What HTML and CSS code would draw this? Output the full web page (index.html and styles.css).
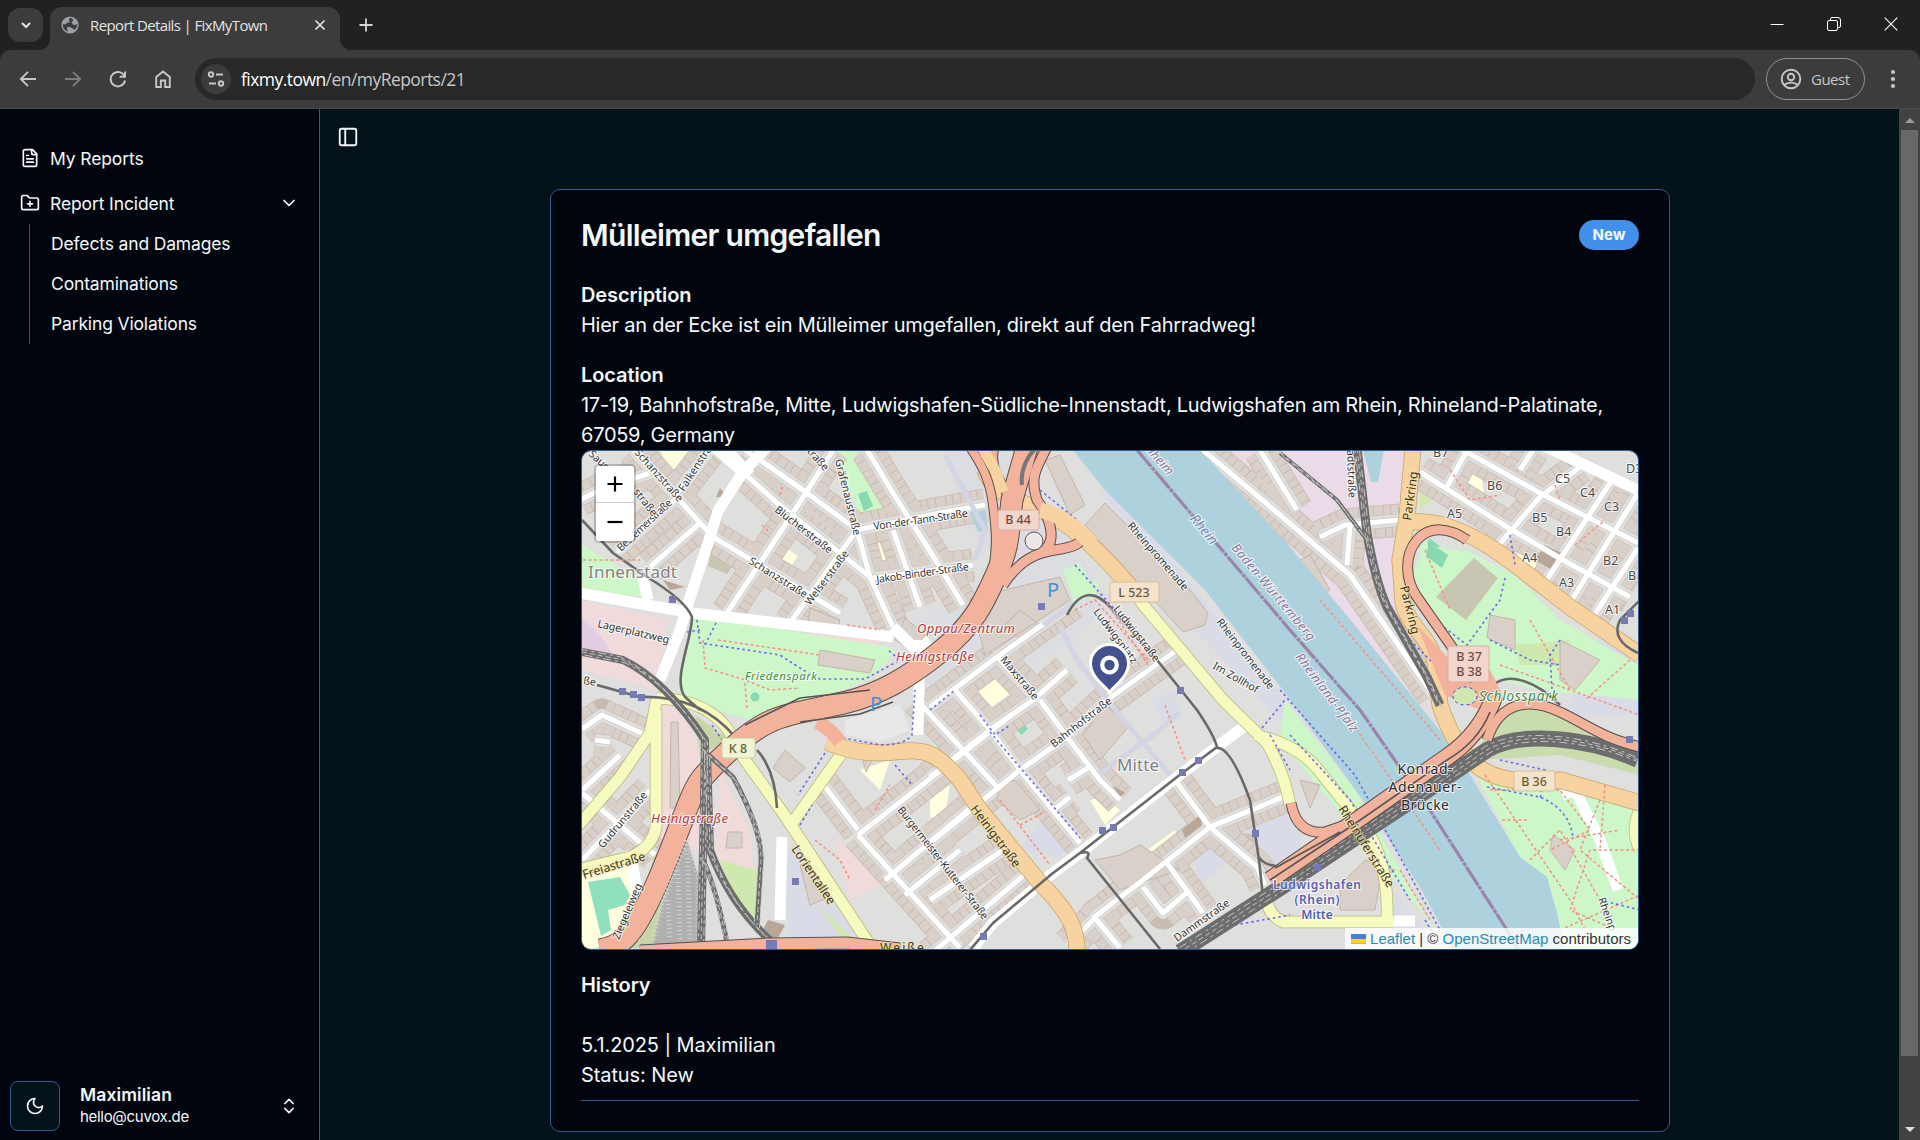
FILE: index.html
```html
<!DOCTYPE html>
<html lang="en">
<head>
<meta charset="utf-8">
<title>Report Details | FixMyTown</title>
<link rel="stylesheet" href="styles.css">
</head>
<body>
<div class="window">
  <header class="tabstrip">
    <button class="tab-search"><svg width="12" height="12" viewBox="0 0 12 12"><path d="M2 4l4 4 4-4" fill="none" stroke="#e3e3e3" stroke-width="2"/></svg></button>
    <div class="tab">
      <svg class="globe" width="18" height="18" viewBox="0 0 18 18"><circle cx="9" cy="9" r="8.6" fill="#9aa0a6"/><path d="M10 1.8c-2 .6-2.300 2-1.600 3 1 .9 0 1.800-1.600 1.700-1.300 0-1.200 1.600-2.400 1.800H1.900c-.4 3.600 2 6.500 4.800 7.300.4-1.500-.7-2-1-3.200.2-1.300 1.500-1.400 3-1.300 1.500.2 1.700 1.700 3.200 1.500.9.200.5 1.500 1.400 1.500 2-1.300 3.300-3.500 2.900-6-1.200.2-1.600 1.200-3 1-1.700-.3-1.400-2-2.800-2.700 0-1 1.800-1.100 1.900-2.200.1-1-.9-1.300-2.300-2.400z" fill="#3c3c3c"/></svg>
      <span class="tab-title">Report Details | FixMyTown</span>
      <svg class="tab-close" width="12" height="12" viewBox="0 0 12 12"><path d="M1.500 1.500l9 9m0-9l-9 9" stroke="#e3e3e3" stroke-width="1.700"/></svg>
    </div>
    <svg class="newtab" width="14" height="14" viewBox="0 0 14 14"><path d="M7 .5v13M.5 7h13" stroke="#d5d5d5" stroke-width="1.800"/></svg>
    <div class="controls">
      <svg width="14" height="14" viewBox="0 0 14 14"><path d="M.5 7.500h13" stroke="#fff"/></svg>
      <svg width="14" height="14" viewBox="0 0 14 14" fill="none" stroke="#fff"><rect x=".5" y="3.500" width="10" height="10" rx="1.500"/><path d="M3.500 3V2A1.500 1.500 0 0 1 5 .5h6A2.500 2.500 0 0 1 13.500 3v6a1.500 1.500 0 0 1-1.500 1.500h-1"/></svg>
      <svg width="14" height="14" viewBox="0 0 14 14"><path d="M.7.7l12.600 12.600m0-12.600L.7 13.300" stroke="#fff" stroke-width="1.100"/></svg>
    </div>
  </header>
  <div class="toolbar">
    <div class="nav">
      <svg width="18" height="18" viewBox="0 0 18 18"><path d="M17 9H2M9 1.800L1.800 9 9 16.200"/></svg>
      <svg class="off" width="18" height="18" viewBox="0 0 18 18"><path d="M1 9h15M9 1.800L16.200 9 9 16.200"/></svg>
      <svg width="18" height="18" viewBox="0 0 18 18"><path d="M15.600 6.500A7.200 7.200 0 1 0 16 10.500M16 1.500v5.300h-5.300"/></svg>
      <svg width="18" height="18" viewBox="0 0 18 18"><path d="M2.200 7L9 1.500 15.800 7v10h-4.600v-6.500H6.800V17H2.200z"/></svg>
    </div>
    <div class="address">
      <span class="site"><svg width="18" height="18" viewBox="0 0 18 18"><circle cx="4" cy="4.500" r="2.200"/><path d="M9 4.500h7M2 13.500h7"/><circle cx="14" cy="13.500" r="2.200"/></svg></span>
      <span class="url"><b>fixmy.town</b>/en/myReports/21</span>
    </div>
    <div class="guest"><svg width="22" height="22" viewBox="0 0 22 22"><circle cx="11" cy="11" r="9.300"/><circle cx="11" cy="9" r="3.200"/><path d="M4.500 17c3-3.200 10-3.200 13 0"/></svg><span>Guest</span></div>
    <svg class="dots" width="6" height="20" viewBox="0 0 6 20"><circle cx="3" cy="3" r="2.100"/><circle cx="3" cy="10" r="2.100"/><circle cx="3" cy="17" r="2.100"/></svg>
  </div>
  <div class="page">
    <aside class="sidebar">
      <nav class="menu">
        <a class="item"><svg class="lucide" viewBox="0 0 24 24"><path d="M15 2H6a2 2 0 0 0-2 2v16a2 2 0 0 0 2 2h12a2 2 0 0 0 2-2V7Z"/><path d="M14 2v4a2 2 0 0 0 2 2h4M10 9H8M16 13H8M16 17H8"/></svg><span>My Reports</span></a>
        <a class="item"><svg class="lucide" viewBox="0 0 24 24"><path d="M12 10v6M9 13h6M20 20a2 2 0 0 0 2-2V8a2 2 0 0 0-2-2h-7.900a2 2 0 0 1-1.690-.9L9.600 3.900A2 2 0 0 0 7.930 3H4a2 2 0 0 0-2 2v13a2 2 0 0 0 2 2Z"/></svg><span>Report Incident</span><svg class="lucide end" viewBox="0 0 24 24"><path d="m6 9 6 6 6-6"/></svg></a>
        <div class="sub"><a>Defects and Damages</a><a>Contaminations</a><a>Parking Violations</a></div>
      </nav>
      <div class="user">
        <button class="theme"><svg class="lucide" viewBox="0 0 24 24"><path d="M12 3a6 6 0 0 0 9 9 9 9 0 1 1-9-9Z"/></svg></button>
        <div class="who"><strong>Maximilian</strong><span>hello@cuvox.de</span></div>
        <svg class="lucide end" viewBox="0 0 24 24"><path d="m7 15 5 5 5-5M7 9l5-5 5 5"/></svg>
      </div>
    </aside>
    <main class="main">
      <svg class="lucide panel" viewBox="0 0 24 24"><rect width="18" height="18" x="3" y="3" rx="2"/><path d="M9 3v18"/></svg>
      <article class="card">
        <div class="head"><h1>Mülleimer umgefallen</h1><span class="badge">New</span></div>
        <section><h2>Description</h2><p class="desc">Hier an der Ecke ist ein Mülleimer umgefallen, direkt auf den Fahrradweg!</p></section>
        <section class="loc"><h2>Location</h2><p class="addr">17-19, Bahnhofstraße, Mitte, Ludwigshafen-Südliche-Innenstadt, Ludwigshafen am Rhein, Rhineland-Palatinate,<br>67059, Germany</p></section>
        <div class="map">
<svg class="tiles" viewBox="582 451 1056 498" preserveAspectRatio="none">
<defs>
<g id="west">
<path d="M633 450L673 493 713 537 840 613M580 500L600 490 650 473M677 493L710 450M650 567L700 523 713 537M743 472L777 503 840 553 870 577M745 450L760 460 807 493 857 530M833 450L793 513 760 563 727 613M857 530L840 553 790 623M857 530L870 577 893 627M857 530L940 513 985 505M867 450L893 493 940 567 963 605M893 530L920 607M873 578L973 565M617 552L677 498"/>
<path d="M582 729L602 715 650 737M595 740L610 742M620 755L582 790M582 793L655 855M650 790L582 860M823 784L858 830M858 835L1005 720M858 835L960 948M885 880L980 800M930 955L1030 870M905 895L960 850"/>
<path d="M930 843L983 800 1020 770 1067 737 1107 700 1177 650M930 777L990 730 1033 700 1067 670M930 707L997 657 1073 603M930 900L1003 850M1093 918L1143 880 1210 827 1283 797M1068 945L1095 918 1120 948M997 657L1038 700M955 690L990 730 1020 770 1080 843M917 700L963 750 1000 790M1040 700L1067 737 1100 780 1120 800M1177 783L1210 827 1257 867 1265 885M1143 887L1163 913 1190 890M1167 863L1203 913M1068 780L1088 768M1053 810L1070 797"/>
</g>
<g id="east">
<path d="M1420 472L1507 527 1563 560 1630 597M1463 450L1540 493 1638 543M1467 450L1447 487M1533 450L1520 470M1580 467L1540 497 1497 547M1612 480L1540 590M1638 493L1570 603M1638 548L1593 617"/>
<path d="M1203 450L1280 515 1350 575 1433 695M1260 450L1297 510M1320 537L1345 525 1400 520M1347 565L1350 525"/>
</g>
<g id="mway">
<path class="w22" d="M600 950C620 946 632 940 657 883S690 792 703 777 745 734 767 723 815 710 847 702 905 680 940 652 985 600 997 573 1008 535 1012 500L1027 447"/>
<path class="w9" d="M1003 585C1020 560 1035 553 1055 550 1075 547 1082 543 1081 537"/>
<path class="w8" d="M970 447C982 465 990 480 993 505S998 545 992 575"/>
<path class="w9" d="M1047 447C1035 470 1030 478 1037 500 1052 520 1058 545 1040 553"/>
<path class="w9" d="M994 447Q988 470 1008 493"/>
</g>
<g id="emway">
<path class="w9" d="M1467 540C1450 528 1430 525 1417 540S1405 580 1417 597 1447 640 1475 680"/>
<path class="w17" d="M1270 880L1353 823 1447 757Q1480 735 1495 695"/>
<path class="w9" d="M1487 740C1500 700 1530 698 1560 712S1600 737 1640 747"/>
<path class="w9" d="M1291 803Q1297 835 1325 832L1360 820"/>
<path class="w11" d="M640 951L767 944 847 943 900 949"/>
</g>
<g id="orange">
<path d="M827 742C860 756 880 753 905 751S940 757 960 780L980 810 1040 883C1070 912 1077 930 1077 952"/>
<path d="M985 470C992 495 1030 505 1050 515S1095 545 1133 590"/>
<path d="M1413 448L1407 517 1400 560 1403 603C1410 630 1435 640 1436 670L1440 705Q1455 750 1480 768T1560 780L1640 803"/>
<path d="M1405 523Q1450 515 1513 563L1570 607 1640 655"/>
</g>
<g id="yellow">
<path d="M657 698L650 733 620 777 578 826M656 710V827Q652 848 630 857L578 870M657 698Q710 700 730 733L740 753 783 813 868 942M842 753L793 822"/>
<path d="M1128 584L1145 607 1223 700 1267 743Q1285 775 1290 805M1255 735Q1300 745 1320 772L1353 813Q1390 850 1387 921M1393 922H1283Q1268 915 1267 900M1640 810Q1630 830 1640 850"/>
</g>
<g id="rails">
<path class="w17" d="M1638 760C1590 738 1520 730 1487 750L1447 777 1367 830 1280 888 1180 952"/>
<path class="w9" d="M1357 448L1367 533Q1375 580 1387 607L1427 677 1440 705"/>
<path class="w4" d="M1280 453L1337 500 1367 540"/>
<path class="w8" d="M582 652L623 660Q665 680 705 740L704 800 701 948"/>
<path class="w8" d="M707 755L710 850Q730 905 772 942"/>
<path class="w5" d="M703 750L733 777Q762 830 761 860L757 925"/>
<path class="w5" d="M703 860Q717 890 728 948"/>
</g>
<g id="tram">
<path d="M582 520L613 553 647 577Q685 600 692 617C692 640 672 680 685 697L700 710M597 685L640 697Q700 695 735 737M757 750Q775 770 777 808"/>
<path d="M970 950L993 923 1053 873 1080 853 1177 777 1217 747Q1214 735 1197 710L1157 660 1110 607C1095 590 1080 590 1067 615M1080 853Q1092 850 1087 858L1160 949M1216 748Q1230 745 1250 800L1259 860 1263 897M1259 857Q1265 868 1290 866M1638 653Q1610 640 1620 620L1640 600M1490 690C1500 672 1530 675 1560 705"/>
</g>
</defs>
<rect x="580" y="450" width="1060" height="500" fill="#dfdfde"/>
<g fill="#d9dbe6">
<path d="M895 630L955 600 1000 560 960 520 950 450H1005L1110 600 1075 640 930 720z" opacity=".55"/>
<path d="M1150 700L1175 690 1180 712 1165 725zM1015 855L1045 815 1070 830 1060 862 1045 850zM1213 830L1300 810 1300 900 1262 870zM1190 845L1215 830 1230 860 1200 885zM780 848L800 850 830 900 870 935 790 940z"/>
<path d="M1560 463L1583 470 1570 490 1550 480zM1600 637L1640 660V715L1565 715 1580 670z"/>
<path d="M1100 490L1120 495 1300 720 1290 730 1180 615z"/>
<path d="M1385 880L1440 950H1395z"/>
</g>
<path d="M1200 450H1410L1400 600 1410 690 1280 540z" fill="#ebdbe8"/>
<path d="M582 600L668 620 655 690 582 670z" fill="#f0dada"/>
<path d="M582 617L600 635 613 655 582 652z" fill="#e2cde2"/>
<path d="M663 705Q690 705 700 760V850L660 850zM720 770L750 830 753 870 715 860zM820 630L880 640 870 670 815 665zM835 840L875 860 880 885 850 900z" fill="#f0dada"/>
<g fill="#cdf7c9">
<path d="M693 615L895 648Q880 690 780 705L750 720 700 705 680 700 682 665zM582 545L642 580 645 597 582 590zM835 450H853L883 508 860 517zM1063 570L1080 563 1095 590 1075 605zM1080 585L1100 582 1092 600z"/>
<path d="M1420 540L1450 550 1520 580 1560 620 1638 665V700L1540 690 1500 680 1460 655 1420 600z"/>
<path d="M1470 763L1500 780 1640 808V950H1563L1547 877 1520 857z"/>
<path d="M1600 525L1607 520 1605 555 1575 550z"/>
<path d="M1285 700L1355 790 1440 940 1420 910 1280 740zM930 705L957 745 940 757 928 735z"/>
</g>
<path d="M1485 715Q1520 695 1560 712L1640 748V775L1560 755 1480 760z" fill="#c8dcae"/>
<g fill="#cfe8b0">
<path d="M720 860L757 870 755 920 730 890zM782 870L865 950 850 950 815 900zM1515 645L1570 640 1560 665 1520 665zM1420 475L1445 490 1420 510z"/>
<path d="M663 870L655 850 643 905 600 948H655L680 900zM695 715L730 740 700 755z" fill="#c8d5a8"/>
</g>
<g fill="#ffffe0"><path d="M660 450H703L680 490zM582 870L628 860 640 940 582 950zM870 540L885 535 894 560 872 568zM780 544L798 556 790 568 778 557zM968 690L1000 670 1015 690 985 712zM860 770L890 760 880 790zM1140 855L1175 830 1180 840 1162 858zM1520 550L1540 555 1535 570 1515 562zM1090 800L1105 797 1120 810 1105 825zM930 790L950 785 945 815 930 818zM1460 475L1480 468 1485 500 1465 495z"/></g>
<g fill="#88d8b0"><path d="M858 494L867 491 873 506 864 511zM1429 538L1448 553 1442 568 1425 555zM1015 727L1022 722 1028 729 1021 735z"/><path d="M588 882L620 877 630 895 625 905 608 910 611 930 601 936z" fill="#8fe0bc"/><circle cx="755" cy="697" r="4.500"/></g>
<path d="M713 542L740 555 727 574 708 566zM1232 832L1258 835 1257 852 1230 840z" fill="#c8c5b3"/>
<use href="#west" class="b1"/><use href="#west" class="b2"/><use href="#west" class="b3"/><use href="#west" class="b4"/>
<use href="#east" class="b1"/><use href="#east" class="b2"/><use href="#east" class="b3"/><use href="#east" class="b4"/>
<path d="M1412 575L1425 545 1470 552 1520 578 1495 640 1460 655z" fill="#cdf7c9"/>
<path d="M1474 558L1498 578 1466 620 1436 597z" fill="#c8c5b3"/>
<path d="M1429 542L1448 555 1442 568 1426 556z" fill="#88d8b0"/>
<g class="block">
<path d="M1105 503L1190 590 1208 613 1205 625 1183 632 1085 525zM1140 845L1180 870 1120 890 1095 860 1120 855zM773 768L785 750 805 768 790 782zM671 722L678 722 680 808H670zM970 598L1060 577 1070 600 985 655zM1490 615L1515 620 1515 650 1487 638zM1560 640L1600 660 1575 690 1560 680zM1045 460L1060 455 1085 505 1070 515zM1395 870L1380 880 1375 910 1340 910V885L1365 860zM905 618L925 635 913 650 895 640zM820 650L875 660 870 673 818 665zM1083 735L1105 705 1130 725 1100 760zM1000 785L1015 780 1040 810 1020 820 997 800zM810 608L840 620 838 628 808 622zM728 832L742 832 742 848 726 848zM800 865L815 860 835 895 810 905zM860 750L875 755 866 772zM1300 780L1320 785 1310 808zM1553 835L1575 850 1565 870 1550 850zM1020 610L1040 625 1020 640 1005 625zM1300 560L1310 555 1330 590 1320 595z"/>
</g>
<g class="dark"><path d="M720 488L727 497 716 497zM663 580L685 587 670 590zM1112 785L1125 793 1120 797zM1182 830L1200 815 1202 825 1185 838zM1545 545L1562 553 1552 570 1535 560zM768 920L785 925 778 938 760 935z"/></g>
<path class="river" d="M1073 450L1105 490 1205 590 1283 690 1370 810 1420 887 1443 930 1450 950H1565L1557 913 1547 877 1520 857 1453 747 1407 690 1353 623 1290 547 1200 450zM1363 450H1384L1378 482H1371zM970 512L985 510 988 530 978 532z"/>
<path class="border" d="M1137 450L1290 630 1360 710 1433 815 1507 930 1518 950"/>
<use href="#west" class="s1"/><use href="#east" class="s1"/><use href="#west" class="s2"/><use href="#east" class="s2"/>
<path d="M1060 627L1077 660 1113 707 1177 783M1100 773L1160 730 1180 712M1043 625L1073 603M945 455L985 530 975 560" fill="none" stroke="#d3d4e4" stroke-width="5"/>
<g class="wide"><path d="M713 446L743 472 718 511 710 537 687 607 680 630 660 680M768 446L743 472M725 448L750 475M580 593L647 605 693 613 863 633 893 637M643 577L648 600M893 627L918 652 930 640M920 640L918 735M973 948L993 923 1053 873 1080 853 1177 777 1250 722M1540 444L1638 490M1562 795L1575 790 1600 840 1618 890M782 837L780 920M1393 921H1415M630 850L637 890"/></g>
<path d="M845 720L900 705 910 730 880 742 845 735z" fill="#e8e8e8"/>
<use href="#yellow" class="yc"/><use href="#yellow" class="yf"/>
<use href="#orange" class="oc"/><use href="#orange" class="of"/>
<use href="#tram" class="tram"/>
<g class="red"><path d="M703 640L705 668Q730 675 745 680L770 690 800 688M718 640L820 655M745 683L747 710M847 625L880 630M762 525L770 533M780 495L783 485M875 810L890 785M815 840L840 860 850 880M1000 800L1050 865M1020 825L1045 812M1165 705L1185 760M1107 603L1148 665M1075 610L1095 600 1150 662M1320 600L1440 740M1425 550L1450 610M1500 665L1640 715M1530 620L1570 690M1630 660L1585 700M1485 775L1570 900 1590 940M1490 790L1560 790 1590 830 1550 850M1600 800L1580 850 1640 900M1640 850L1590 850 1570 910 1640 940M1530 860L1560 830 1600 900M1560 840L1620 830M1450 470L1470 500 1500 495M1555 485L1560 500M1575 545L1605 520M1350 720L1440 850M1560 930L1640 895M1605 785L1600 850M1400 870L1430 920M1527 820L1500 820M583 560L640 560"/></g>
<g class="blue"><path d="M697 620L700 643 780 655Q810 675 820 679H865L900 660 888 650M716 623L705 645M843 738L880 745Q905 745 912 735L915 690M712 725L722 740M825 753L798 795M800 825L812 805M895 765L912 785M980 715L995 735 1010 725M990 732L1080 838M1075 565L1115 610M1040 490L1077 520M930 710L955 690M1280 690L1355 775 1440 930M1290 735L1350 800 1410 900M1410 640L1435 665M1490 640L1530 660 1560 665M1505 578L1500 600 1467 645 1445 628M1510 535L1515 565M1560 640L1550 655 1552 690M1487 787L1540 797Q1570 810 1573 838M1500 760L1545 770 1540 800M1270 735L1290 770M1235 925L1290 915M687 632L700 630M1262 728L1285 700M1600 900L1640 910M1425 920L1440 945"/></g>
<use href="#mway" class="mc"/><use href="#mway" class="mf"/>
<path d="M1022 485C1020 470 1028 455 1036 448" fill="none" stroke="#777" stroke-width="4"/>
<path d="M982 447L995 470 1003 492" fill="none" stroke="#f6d3a0" stroke-width="11"/>
<path d="M1040 510Q1065 515 1092 544" fill="none" stroke="#f6d3a0" stroke-width="15.500"/>
<path d="M817 722Q830 728 840 742" fill="none" stroke="#f3b29b" stroke-width="14"/>
<path d="M1417 625L1450 660 1490 670 1505 700 1480 710 1445 695z" fill="#f3b29b"/>
<ellipse cx="1034" cy="541" rx="9" ry="9" fill="#ece8e4" stroke="#555"/>
<ellipse cx="1465" cy="696" rx="12" ry="9" fill="#cfe8b0" stroke="#44e" stroke-dasharray="3 3"/>
<path d="M687 840L698 875V948H652L662 905z" class="yard"/><path d="M687 840L698 875V948H652L662 905zM687 850L690 940M678 870L680 940M668 900L670 940" class="yard2"/>
<use href="#rails" class="rc"/><use href="#rails" class="rf"/><use href="#rails" class="rf big" x="2.500" y="3"/><use href="#rails" class="rf big" x="-2.500" y="-3"/>
<use href="#emway" class="mc"/><use href="#emway" class="mf"/>
<path d="M1270 880L1353 825 1447 760Q1478 742 1490 712M745 725L800 698 870 690M800 722L860 714 893 702M1275 868L1340 832" class="median"/>
<g fill="#777bb3"><path d="M669 596h7v7h-7zM619 688h7v7h-7zM630 691h7v7h-7zM638 694h7v7h-7zM1038 603h7v7h-7zM1177 687h7v7h-7zM1195 757h7v7h-7zM1179 769h7v7h-7zM1099 827h7v7h-7zM1110 824h7v7h-7zM1252 830h7v7h-7zM980 933h7v7h-7zM792 878h7v7h-7zM1314 864h7v7h-7zM1626 736h7v7h-7zM1627 610h7v7h-7zM1621 617h7v7h-7zM766 940h11v9h-11z"/></g>
<g class="road">
<text transform="translate(634 453) rotate(48)">Schanzstraße</text><text transform="translate(588 455) rotate(42)">Sauerstr.</text><text transform="translate(684 492) rotate(-57)">Falkenstraße</text><text transform="translate(621 552) rotate(-43)" textLength="71">Bessemerstraße</text><text transform="translate(633 492) rotate(52)">straße</text>
<text transform="translate(774 511) rotate(38)">Blücherstraße</text><text transform="translate(748 563) rotate(32)">Schanzstraße</text><text transform="translate(810 606) rotate(-53)">Welserstraße</text><text transform="translate(835 460) rotate(76)">Gräfenaustraße</text><text transform="translate(803 448) rotate(48)">straße</text><text transform="translate(874 530) rotate(-8)" textLength="95">Von-der-Tann-Straße</text><text transform="translate(877 583) rotate(-8)" textLength="93">Jakob-Binder-Straße</text>
<text transform="translate(597 627) rotate(13)">Lagerplatzweg</text><text transform="translate(583 684) rotate(8)">ße</text><text transform="translate(603 849) rotate(-50)">Gudrunstraße</text><text transform="translate(619 940) rotate(-67)">Ziegeleiweg</text>
<text transform="translate(1000 660) rotate(50)">Maxstraße</text><text transform="translate(1093 612) rotate(53)">Ludwigsplatz</text><text transform="translate(1113 609) rotate(52)">Ludwigstraße</text><text transform="translate(1127 526) rotate(49)">Rheinpromenade</text><text transform="translate(1216 622) rotate(52)">Rheinpromenade</text><text transform="translate(1212 668) rotate(30)">Im Zollhof</text>
<text transform="translate(1054 748) rotate(-38)">Bahnhofstraße</text><text transform="translate(897 810) rotate(52)" textLength="140">Burgermeister-Kutterer-Straße</text><text transform="translate(1177 942) rotate(-35)">Dammstraße</text><text transform="translate(1598 899) rotate(70)">Rheinp</text><text transform="translate(1347 450) rotate(88)">adtstraße</text>
</g>
<g class="major">
<text transform="translate(584 879) rotate(-17)">Freiastraße</text><text transform="translate(791 849) rotate(56)">Lorientallee</text><text transform="translate(970 809) rotate(53)">Heinigstraße</text><text transform="translate(1411 521) rotate(-82)">Parkring</text><text transform="translate(1400 587) rotate(76)">Parkring</text><text transform="translate(1338 809) rotate(58)">Rheinuferstraße</text><text x="880" y="952" textLength="44">Weiße</text>
</g>
<g class="place"><text x="588" y="578" textLength="89">Innenstadt</text><text x="1117" y="771" textLength="42">Mitte</text></g>
<g class="blocks"><text x="1433" y="457">B7</text><text x="1487" y="490">B6</text><text x="1555" y="483">C5</text><text x="1580" y="497">C4</text><text x="1604" y="511">C3</text><text x="1626" y="473">D3</text><text x="1447" y="518">A5</text><text x="1532" y="522">B5</text><text x="1556" y="536">B4</text><text x="1603" y="565">B2</text><text x="1522" y="562">A4</text><text x="1559" y="587">A3</text><text x="1605" y="614">A1</text><text x="1628" y="580">B1</text></g>
<g class="exit"><text x="917" y="633" textLength="98">Oppau/Zentrum</text><text x="896" y="661" textLength="78">Heinigstraße</text><text x="651" y="823" textLength="77">Heinigstraße</text></g>
<g class="green"><text x="745" y="680" font-size="11.500" textLength="72">Friedenspark</text><text x="1479" y="701" font-size="13.500" textLength="79">Schlosspark</text></g>
<g class="water"><text transform="translate(1189 519) rotate(50)" font-size="14">Rhein</text><text transform="translate(1145 450) rotate(48)" fill="#8c7799">nheim</text><text transform="translate(1231 548) rotate(50)" fill="#8c7799" textLength="122">Baden-Württemberg</text><text transform="translate(1295 657) rotate(53)" fill="#8c7799" textLength="95">Rheinland-Pfalz</text></g>
<g class="bridge"><text x="1425" y="774" textLength="55">Konrad-</text><text x="1425" y="792" textLength="73">Adenauer-</text><text x="1425" y="810" textLength="48">Brücke</text></g>
<g class="station"><text x="1317" y="889" textLength="88">Ludwigshafen</text><text x="1317" y="904" textLength="45">(Rhein)</text><text x="1317" y="919">Mitte</text></g>
<g class="parking"><text x="1047" y="597">P</text><text x="870" y="711">P</text></g>
<g class="shield">
<rect x="998" y="510" width="41" height="20" rx="2"/><text x="1018" y="524">B 44</text>
<rect x="1448" y="646" width="41" height="36" rx="2"/><text x="1469" y="661">B 37</text><text x="1469" y="676">B 38</text>
<g class="tan"><rect x="1110" y="582" width="49" height="20" rx="2"/><text x="1134" y="597">L 523</text><rect x="1514" y="771" width="41" height="20" rx="2"/><text x="1534" y="786">B 36</text></g>
<g class="lime"><rect x="722" y="738" width="33" height="20" rx="2"/><text x="738" y="753">K 8</text></g>
</g>
<path d="M1109.500 692.500C1104 685 1090.500 677 1090.500 663.500a19 19 0 0 1 38 0c0 13.500-13.500 21.500-19 29z" fill="#43528f" stroke="#fff" stroke-width="3"/><circle cx="1109.500" cy="665" r="7.300" fill="#43528f" stroke="#fff" stroke-width="4.200"/>
</svg>
          <div class="zoom"><span><svg width="16" height="16" viewBox="0 0 16 16"><path d="M8 .5v15M.5 8h15"/></svg></span><span><svg width="16" height="16" viewBox="0 0 16 16"><path d="M.5 8h15"/></svg></span></div>
          <div class="attrib"><svg width="15" height="10" viewBox="0 0 15 10"><path fill="#4c7be1" d="M0 0h15v5H0z"/><path fill="#ffd500" d="M0 5h15v4H0z"/><path fill="#e0bc00" d="M0 9h15v1H0z"/></svg> <a>Leaflet</a> | © <a>OpenStreetMap</a> contributors</div>
        </div>
        <section class="history"><h2>History</h2><p class="entry"><span>5.1.2025 | Maximilian</span><br>Status: New</p></section>
      </article>
    </main>
    <div class="scrollbar"><i class="up"></i><div class="thumb"></div><i class="down"></i></div>
  </div>
</div>
</body>
</html>
```
FILE: styles.css
```css
* { box-sizing: border-box; }
body { margin: 0; background: #04121a; color: #f3f8fd; font-family: Inter, "Liberation Sans", sans-serif; overflow: hidden; }
button { padding: 0; border: 0; }
h1, h2, p { margin: 0; }
.window { display: flex; flex-direction: column; width: 1920px; height: 1140px; background: #202221; }
.tabstrip { display: flex; align-items: center; height: 50px; flex: none; padding-left: 8px; }
.tab-search { display: grid; place-items: center; width: 35px; height: 34px; border-radius: 12px; background: #3c3c3c; }
.tab { position: relative; align-self: flex-end; display: flex; align-items: center; width: 290px; height: 43px; margin-left: 7px; padding: 0 14px 7px 11px; background: #3c3c3c; border-radius: 12px 12px 0 0; }
.tab::before, .tab::after { content: ""; position: absolute; bottom: 0; width: 12px; height: 12px; }
.tab::before { left: -12px; background: radial-gradient(circle at 0 0, transparent 12px, #3c3c3c 12.5px); }
.tab::after { right: -12px; background: radial-gradient(circle at 100% 0, transparent 12px, #3c3c3c 12.5px); }
.tab-title { margin-left: 11px; font: 15px "Open Sans", sans-serif; letter-spacing: -.62px; color: #e3e3e3; white-space: nowrap; }
.tab-close { margin-left: auto; }
.newtab { margin-left: 19px; }
.controls { display: flex; gap: 43px; margin: 0 22px 2px auto; }
.toolbar { display: flex; align-items: center; height: 59px; flex: none; background: #3c3c3c; border-bottom: 1px solid #4a4b4a; border-radius: 10px 10px 0 0; padding-left: 19px; }
.nav { display: flex; gap: 27px; }
.nav svg, .site svg, .guest svg { fill: none; stroke: #c7c7c7; stroke-width: 1.9; }
.nav .off { stroke: #7c7c7c; }
.address { display: flex; align-items: center; width: 1560px; height: 42px; margin-left: 23px; padding-left: 6px; border-radius: 21px; background: #282828; }
.site { display: grid; place-items: center; width: 30px; height: 30px; border-radius: 50%; background: #3c3c3c; }
.url { margin-left: 10px; font: 17.5px "Open Sans", sans-serif; letter-spacing: -.55px; color: #c7c7c7; }
.url b { font-weight: 400; color: #fff; }
.guest { display: flex; align-items: center; gap: 9px; width: 99px; height: 42px; margin-left: 11px; padding-left: 13px; border: 1px solid #8f8f8f; border-radius: 21px; font: 15px "Open Sans", sans-serif; letter-spacing: -.5px; color: #c7c7c7; }
.dots { margin-left: 25px; fill: #c7c7c7; }
.page { display: flex; flex: 1; min-height: 0; background: #04121a; }
.lucide { width: 20px; height: 20px; flex: none; fill: none; stroke: #f3f8fd; stroke-width: 2; stroke-linecap: round; stroke-linejoin: round; }
.sidebar { display: flex; flex-direction: column; justify-content: space-between; width: 320px; padding: 29px 20px 9px; border-right: 1px solid #2b5f93; background: #01060e; font-size: 17.5px; }
.item { display: flex; align-items: center; gap: 10px; height: 40px; margin-bottom: 5px; letter-spacing: -.12px; }
.end { margin-left: auto; }
.sub { display: flex; flex-direction: column; margin: -4px 0 0 9px; padding-left: 21px; border-left: 1px solid #285780; letter-spacing: -.15px; }
.sub a { height: 40px; line-height: 40px; }
.user { display: flex; align-items: center; margin-left: -10px; }
.theme { display: grid; place-items: center; width: 50px; height: 50px; border: 1px solid #2b5f93; border-radius: 8px; background: #04121a; }
.who { display: flex; flex-direction: column; margin-left: 20px; line-height: 22px; }
.who strong { font-weight: 600; letter-spacing: .1px; }
.who span { font-size: 15px; letter-spacing: -.3px; }
.main { flex: 1; padding: 17px 0 0 17px; }
.panel { display: block; width: 22px; height: 22px; }
.card { width: 1120px; height: 943px; margin: 41px 0 0 213px; padding: 30px; border: 1px solid #2b5f93; border-radius: 10px; background: #01060e; font-size: 20px; line-height: 30px; }
.head { display: flex; align-items: center; justify-content: space-between; height: 30px; margin-bottom: 30px; }
h1 { font-size: 30px; font-weight: 600; letter-spacing: -.7px; }
.badge { width: 60px; height: 30px; border-radius: 15px; background: #4290ea; text-align: center; font-size: 15px; font-weight: 700; }
h2 { font-size: 20px; font-weight: 600; letter-spacing: -.1px; }
p { letter-spacing: -.1px; white-space: nowrap; }
.desc { letter-spacing: -.25px; }
.addr { letter-spacing: -.265px; }
.loc { margin-top: 20px; }
.map { position: relative; height: 500px; border: 1px solid #2b5f93; border-radius: 10px; overflow: hidden; }
.tiles { display: block; width: 1056px; height: 498px; font-family: "Noto Sans", sans-serif; }
.zoom { position: absolute; left: 12px; top: 13px; border: 2px solid rgba(0,0,0,.2); border-radius: 5px; background-clip: padding-box; }
.zoom span { display: grid; place-items: center; width: 38px; height: 38px; background: #fff; border-radius: 0 0 3px 3px; }
.zoom span:first-child { height: 37px; border-bottom: 1px solid #ccc; border-radius: 3px 3px 0 0; }
.zoom path { stroke: #000; stroke-width: 2.2; }
.attrib { position: absolute; right: 0; bottom: 0; height: 21px; padding: 0 7px 0 6px; background: rgba(255,255,255,.8); font: 15px/21px "Liberation Sans", sans-serif; color: #333; white-space: nowrap; }
.attrib a { color: #0078a8; opacity: .85; }
.history { height: 131px; margin-top: 20px; border-bottom: 1px solid #2b5f93; }
.entry { margin-top: 30px; }
.scrollbar { display: flex; flex-direction: column; align-items: center; width: 21px; background: #424242; }
.thumb { width: 17px; height: 926px; background: #686868; }
.up, .down { width: 0; height: 0; border: 5px solid transparent; }
.up { margin: 4px 0 7px; border-bottom-color: #9b9b9b; }
.down { margin-top: auto; margin-bottom: 3px; border-top-color: #ddd; }
/* map layers: --e widens a line for its casing, --t sets one width for all */
.w4 { stroke-width: var(--t, calc(4px + var(--e))); }
.w5 { stroke-width: var(--t, calc(5px + var(--e))); }
.w8 { stroke-width: var(--t, calc(8px + var(--e))); }
.w9 { stroke-width: var(--t, calc(9px + var(--e))); }
.w11 { stroke-width: var(--t, calc(11px + var(--e))); }
.w17 { stroke-width: var(--t, calc(16px + var(--e))); }
.w22 { stroke-width: var(--t, calc(21px + var(--e))); }
.b1, .b2, .b3, .b4, .s1, .s2, .wide, .yc, .yf, .oc, .of, .tram, .red, .blue, .mc, .mf, .rc, .rf, .median, .border { fill: none; stroke-linejoin: round; }
.b1 { stroke: #c9bbb0; stroke-width: 33; }
.b2 { stroke: #d9d0c9; stroke-width: 31.5; stroke-dasharray: 7 1 9 1 6 1; }
.b3 { stroke: #c9bbb0; stroke-width: 13; }
.b4 { stroke: #dfdfde; stroke-width: 12; }
.block { fill: #d9d0c9; stroke: #c4b5a9; }
.dark { fill: #b8a799; }
.river { fill: #aed1de; }
.border { stroke: #9a84aa; stroke-width: 3.2; stroke-dasharray: 22 1 4 1; }
.s1 { stroke: #cfcccb; stroke-width: 6.5; }
.s2 { stroke: #fff; stroke-width: 5.2; }
.wide { stroke: #fff; stroke-width: 11; }
.yc { stroke: #b5b878; stroke-width: 12.5; }
.yf { stroke: #f7fabf; stroke-width: 11; }
.oc { stroke: #c9a365; stroke-width: 17; }
.of { stroke: #f6d3a0; stroke-width: 15.5; }
.tram { stroke: #696969; stroke-width: 2.6; }
.red { stroke: #f78f82; stroke-width: 1.5; stroke-dasharray: 3 2.5; }
.blue { stroke: #5555ee; stroke-width: 1.6; stroke-dasharray: 2.5 3; opacity: .85; }
.mc { --e: 2px; stroke: #5a4f4a; }
.mf { --e: 0px; stroke: #f3b29b; }
.rc { --e: 0px; stroke: #6d6d6d; }
.rf { --t: 1px; stroke: #c4c4c4; stroke-dasharray: 5 3; }
.big { stroke-dasharray: 8 4 3 4; }
.median { stroke: #555; stroke-width: 1.6; }
.yard { fill: #b0b0b0; }
.yard2 { fill: none; stroke: #d2d2d2; stroke-width: 5; stroke-dasharray: 1 3; }
.tiles text { paint-order: stroke; stroke: rgba(255,255,255,.75); stroke-width: 2.2px; stroke-linejoin: round; }
.road { font-size: 10.6px; fill: #333; }
.major { font-size: 12.3px; fill: #3a3424; }
.tiles .major text { stroke: rgba(247,235,180,.6); }
.place { font-size: 17px; fill: #808080; }
.blocks { font-size: 12.5px; fill: #4a4a4a; }
.exit { font-size: 13px; font-style: italic; fill: #b53a40; }
.green { font-style: italic; fill: #3f9040; }
.water { font-size: 12.5px; font-style: italic; fill: #6a90b8; }
.bridge { font-size: 14px; text-anchor: middle; fill: #2a2a2a; }
.station { font-size: 12px; font-weight: 600; text-anchor: middle; fill: #5660b8; }
.parking { font-size: 20px; fill: #3b93dc; }
.tiles .parking text, .tiles .shield text { stroke: none; }
.shield { font-size: 12.5px; text-anchor: middle; font-weight: 500; fill: #7b4a40; }
.shield rect { fill: #f0d6cc; stroke: #dbaea0; }
.tan { fill: #6f5a35; }
.tan rect { fill: #f3e3cd; stroke: #d9bf94; }
.lime { fill: #5e6234; }
.lime rect { fill: #f0f3d6; stroke: #cdd19b; }
```
